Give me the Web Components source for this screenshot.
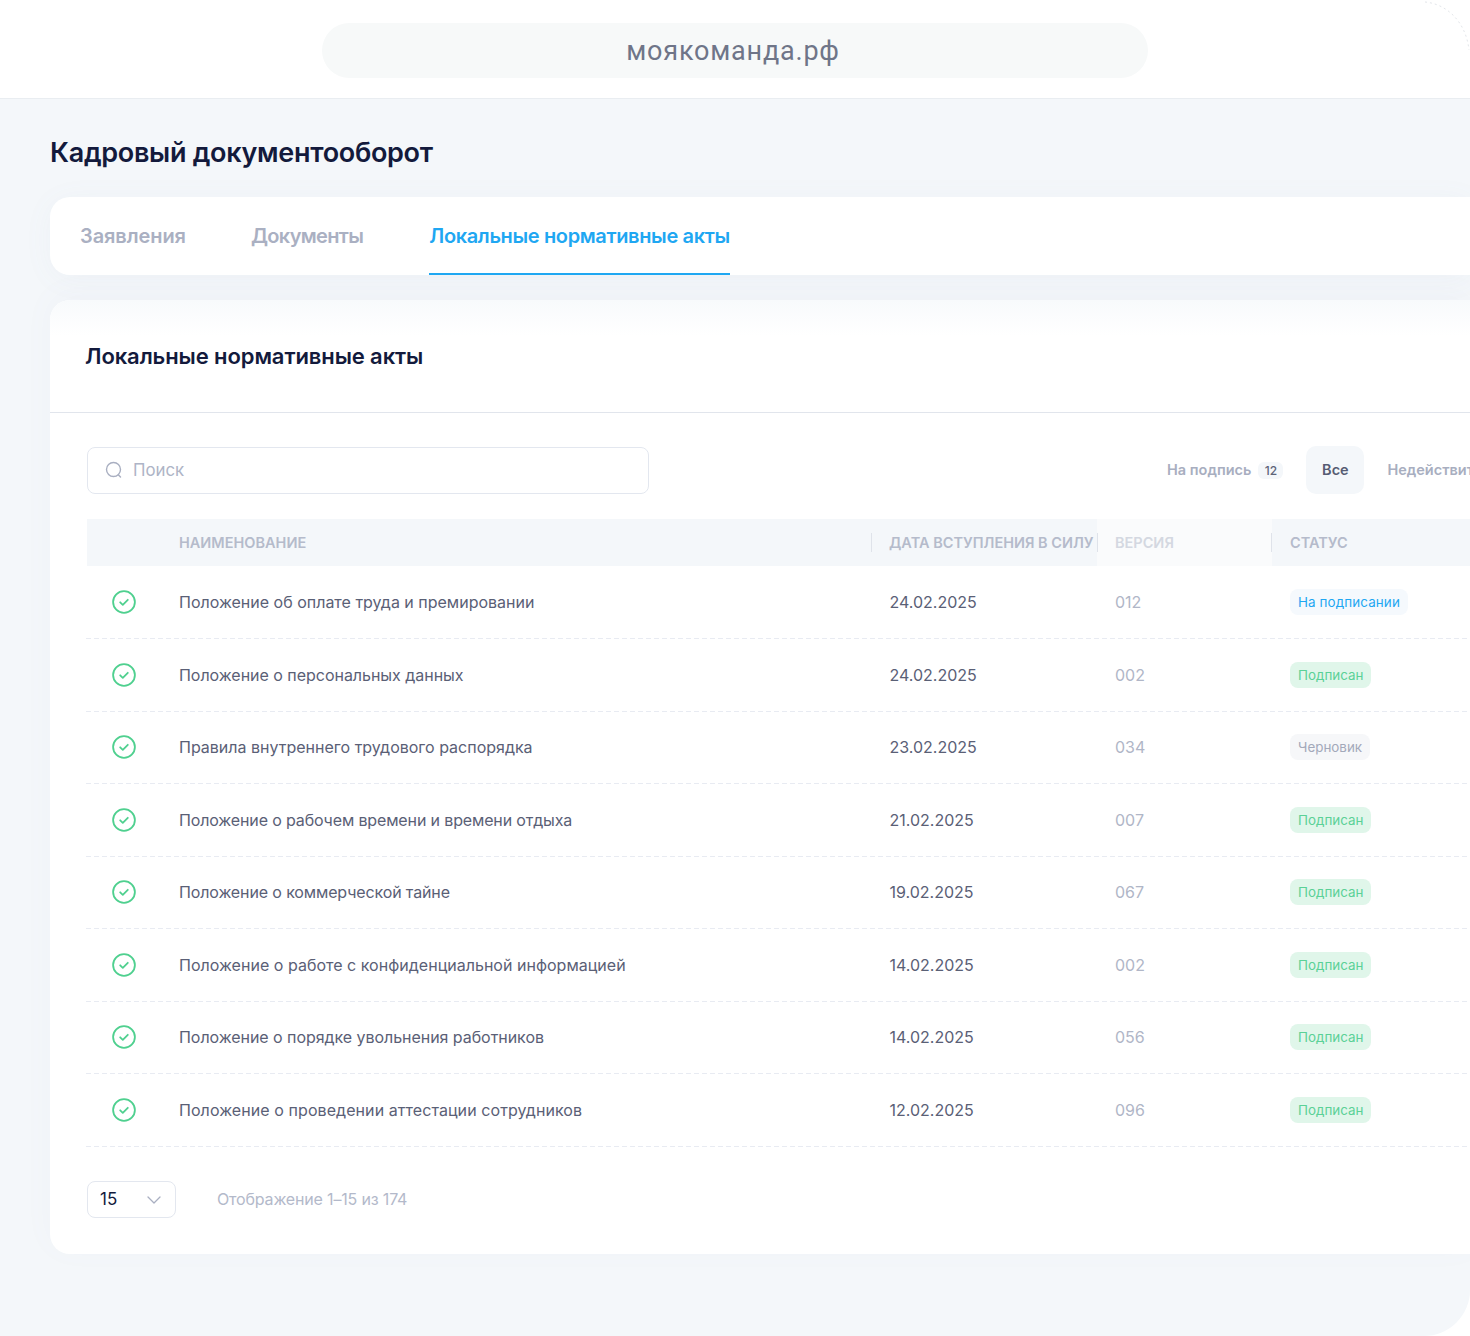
<!DOCTYPE html>
<html lang="ru"><head><meta charset="utf-8"><title>Кадровый документооборот</title>
<style>
html,body{margin:0;padding:0;background:#fff}
body{font-family:Inter,"Noto Sans",sans-serif;width:1470px;height:1336px;overflow:hidden}
</style></head><body>
<hr-app></hr-app>
<script>
function def(name,css,html){
  customElements.define(name,class extends HTMLElement{
    constructor(){super();const r=this.attachShadow({mode:'open'});
      r.innerHTML='<style>'+css+'</style>'+(typeof html==='function'?html(this):html);}
  });
}
const CHECK='<svg width="24" height="24" viewBox="0 0 24 24" fill="none"><circle cx="12" cy="12" r="10.9" stroke="#4fd08f" stroke-width="1.8"/><path d="M8.2 12.3l2.6 2.5 5-5" stroke="#4fd08f" stroke-width="1.8" stroke-linecap="round" stroke-linejoin="round"/></svg>';

def('browser-bar',`:host{display:flex;justify-content:center;align-items:center;height:98px;background:#fff;border-bottom:1px solid #e9edf1;position:relative}
.pill{width:826px;height:55px;border-radius:28px;background:#f7f9f9;display:flex;align-items:center;justify-content:center;font:400 27px/1 Roboto,sans-serif;color:#6f7588;letter-spacing:.8px;margin-top:3px;padding:2px 4px 0 0;box-sizing:border-box}
svg{position:absolute;right:0;top:0}`,
`<div class="pill"><slot></slot></div><svg width="50" height="52" viewBox="0 0 50 52" fill="none"><path d="M5 2C27 4 46 22 49 50" stroke="#e3e6ea" stroke-width="1" stroke-dasharray="2 3"/></svg>`);

def('page-tabs',`:host{display:flex;gap:65px;height:78px;padding-left:30px;background:#fff;border-radius:20px 0 0 20px;box-shadow:0 4px 30px rgba(120,140,180,.05);box-sizing:border-box}`,`<slot></slot>`);
def('page-tab',`:host{display:flex;align-items:center;height:78px;box-sizing:border-box;padding-top:2px;font:600 20px/1 Inter,sans-serif;color:#aab0c2;letter-spacing:-.08px;border-bottom:2px solid transparent;white-space:nowrap}
:host([doc]){letter-spacing:-.66px}
:host([active]){color:#1fa7f2;border-bottom-color:#1fa7f2;letter-spacing:-.36px;margin-left:1px}`,`<slot></slot>`);

def('doc-card',`:host{display:block;background:#fff;border-radius:20px 0 0 20px;margin-top:25px;height:954px;box-shadow:0 -6px 30px rgba(120,140,180,.04);overflow:hidden}
header{height:113px;box-sizing:border-box;border-bottom:1px solid #e1e5ec;background:linear-gradient(#f8fafc,#fff 36px);display:flex;align-items:center;padding:0 0 0 35px;font:600 22px/1 Inter,sans-serif;color:#131a3c;letter-spacing:-.1px}
.b{padding:33.500px 0 0 37px}`,`<header><slot name="title"></slot></header><div class="b"><slot></slot></div>`);

def('doc-toolbar',`:host{display:flex;align-items:center;height:47.5px;margin-bottom:25px;width:1500px}
.search{width:562px;height:46.5px;box-sizing:border-box;border:1.500px solid #e3e7ef;border-radius:8px;display:flex;align-items:center;gap:10px;padding-left:17px;font:400 16.800px/1 Inter,sans-serif;color:#aeb4c6}
.f{display:flex;align-items:center;margin-left:518px;font:600 14.500px/1 Inter,sans-serif;color:#a8aec0;white-space:nowrap}
.n{margin-left:7px;width:25px;height:17px;border-radius:6px;background:#f4f7fa;color:#5d6378;font:500 12px/17px Inter,sans-serif;text-align:center;margin-right:23px}
.a{width:58px;height:48px;border-radius:10px;background:#f4f7fa;color:#565c73;display:flex;align-items:center;justify-content:center;margin-right:23px;font-size:14.500px}`,
`<div class="search"><svg width="18" height="18" viewBox="0 0 18 18" fill="none"><circle cx="8.500" cy="8.500" r="7" stroke="#a9afc1" stroke-width="1.400"/><path d="M13.500 14l2 2" stroke="#a9afc1" stroke-width="1.400" stroke-linecap="round"/></svg><span>Поиск</span></div>
<div class="f"><span>На подпись</span><span class="n">12</span><span class="a">Все</span><span>Недействительные</span></div>`);

const COLS='display:grid;grid-template-columns:92px 692px 226px 175px 300px;';
def('table-head',`:host{${COLS}height:47px;margin-bottom:.5px;font:600 14.500px/47px Inter,sans-serif;color:#b5bbcb;white-space:nowrap}
div{background:#f4f7fa;position:relative;padding-left:18px}
div:nth-of-type(1),div:nth-of-type(2){padding-left:0}
.v{background:#fafbfc;color:#d4d8e1}
.sep::before{content:"";position:absolute;left:0;top:14px;height:19px;width:1px;background:#dfe3ea}
.st::before{left:-1px;z-index:1}`,
`<div></div><div>НАИМЕНОВАНИЕ</div><div class="sep">ДАТА ВСТУПЛЕНИЯ В СИЛУ</div><div class="v sep">ВЕРСИЯ</div><div class="sep st">СТАТУС</div>`);

def('doc-row',`:host{${COLS}height:72.5px;box-sizing:border-box;align-items:center;margin-left:-1px;padding:0 0 1px 1px;background:repeating-linear-gradient(90deg,#e8ebf2 0 5px,transparent 5px 8px) left bottom/100% 1px no-repeat;font:400 16px/1 Inter,sans-serif;color:#5a6076;white-space:nowrap}
.i{display:flex;padding-left:25px}
.d{padding-left:18.500px}
.v,.s{padding-left:18px}
.v{color:#b0b6c7}`,
e=>`<div class="i">${CHECK}</div><div style="letter-spacing:${e.getAttribute('ls')||0}px">${e.getAttribute('name')}</div><div class="d">${e.getAttribute('date')}</div><div class="v">${e.getAttribute('ver')}</div><div class="s"><status-badge kind="${e.getAttribute('kind')}">${{a:'На подписании',b:'Подписан',c:'Черновик'}[e.getAttribute('kind')]}</status-badge></div>`);

def('status-badge',`:host{display:inline-block;height:26px;border-radius:8px;padding:0 8px;font:400 13.400px/26px Inter,sans-serif}
:host([kind=a]){background:#f5f9fd;color:#1fa7f2;letter-spacing:.12px}
:host([kind=b]){background:#e0f6ea;color:#5bd197}
:host([kind=c]){background:#f6f7f9;color:#a3a9ba}`,`<slot></slot>`);

def('table-pager',`:host{display:flex;align-items:center;margin-top:34.500px;font:400 16px/1 Inter,sans-serif;color:#b3b9ca;letter-spacing:-.17px}
.s{width:89px;height:37px;box-sizing:border-box;border:1.500px solid #e3e7ef;border-radius:8px;display:flex;align-items:center;justify-content:space-between;padding:0 14px 1px 12px;color:#131a3c;margin-right:41px;font-size:17px;letter-spacing:0}
.s svg{margin-top:1px}
.t{margin-bottom:2px}`,
`<div class="s"><span>15</span><svg width="14" height="8" viewBox="0 0 14 8" fill="none"><path d="M1 1l6 6 6-6" stroke="#a9afc1" stroke-width="1.300" stroke-linecap="round" stroke-linejoin="round"/></svg></div><span class="t"><slot></slot></span>`);

def('hr-app',`:host{display:block;width:1470px;height:1336px;overflow:hidden;position:relative}
main{height:1237px;background:#f4f7fa;border-bottom-right-radius:46px;padding:1px 0 0 50px;box-sizing:border-box;overflow:hidden}
h1{margin:0;height:97px;box-sizing:border-box;padding-top:38px;font:600 27px/30px Inter,sans-serif;color:#131a3c;letter-spacing:-.3px}`,
`<browser-bar>моякоманда.рф</browser-bar>
<main><h1>Кадровый документооборот</h1>
<page-tabs><page-tab>Заявления</page-tab><page-tab doc>Документы</page-tab><page-tab active>Локальные нормативные акты</page-tab></page-tabs>
<doc-card><span slot="title">Локальные нормативные акты</span>
<doc-toolbar></doc-toolbar>
<table-head></table-head>
<doc-row name="Положение об оплате труда и премировании" date="24.02.2025" ver="012" kind="a"></doc-row>
<doc-row name="Положение о персональных данных" ls="-.03" date="24.02.2025" ver="002" kind="b"></doc-row>
<doc-row name="Правила внутреннего трудового распорядка" date="23.02.2025" ver="034" kind="c"></doc-row>
<doc-row name="Положение о рабочем времени и времени отдыха" ls="-.14" date="21.02.2025" ver="007" kind="b"></doc-row>
<doc-row name="Положение о коммерческой тайне" ls="-.13" date="19.02.2025" ver="067" kind="b"></doc-row>
<doc-row name="Положение о работе с конфиденциальной информацией" ls=".02" date="14.02.2025" ver="002" kind="b"></doc-row>
<doc-row name="Положение о порядке увольнения работников" ls="-.05" date="14.02.2025" ver="056" kind="b"></doc-row>
<doc-row name="Положение о проведении аттестации сотрудников" ls=".07" date="12.02.2025" ver="096" kind="b"></doc-row>
<table-pager>Отображение 1–15 из 174</table-pager>
</doc-card></main>`);
</script>
</body></html>
